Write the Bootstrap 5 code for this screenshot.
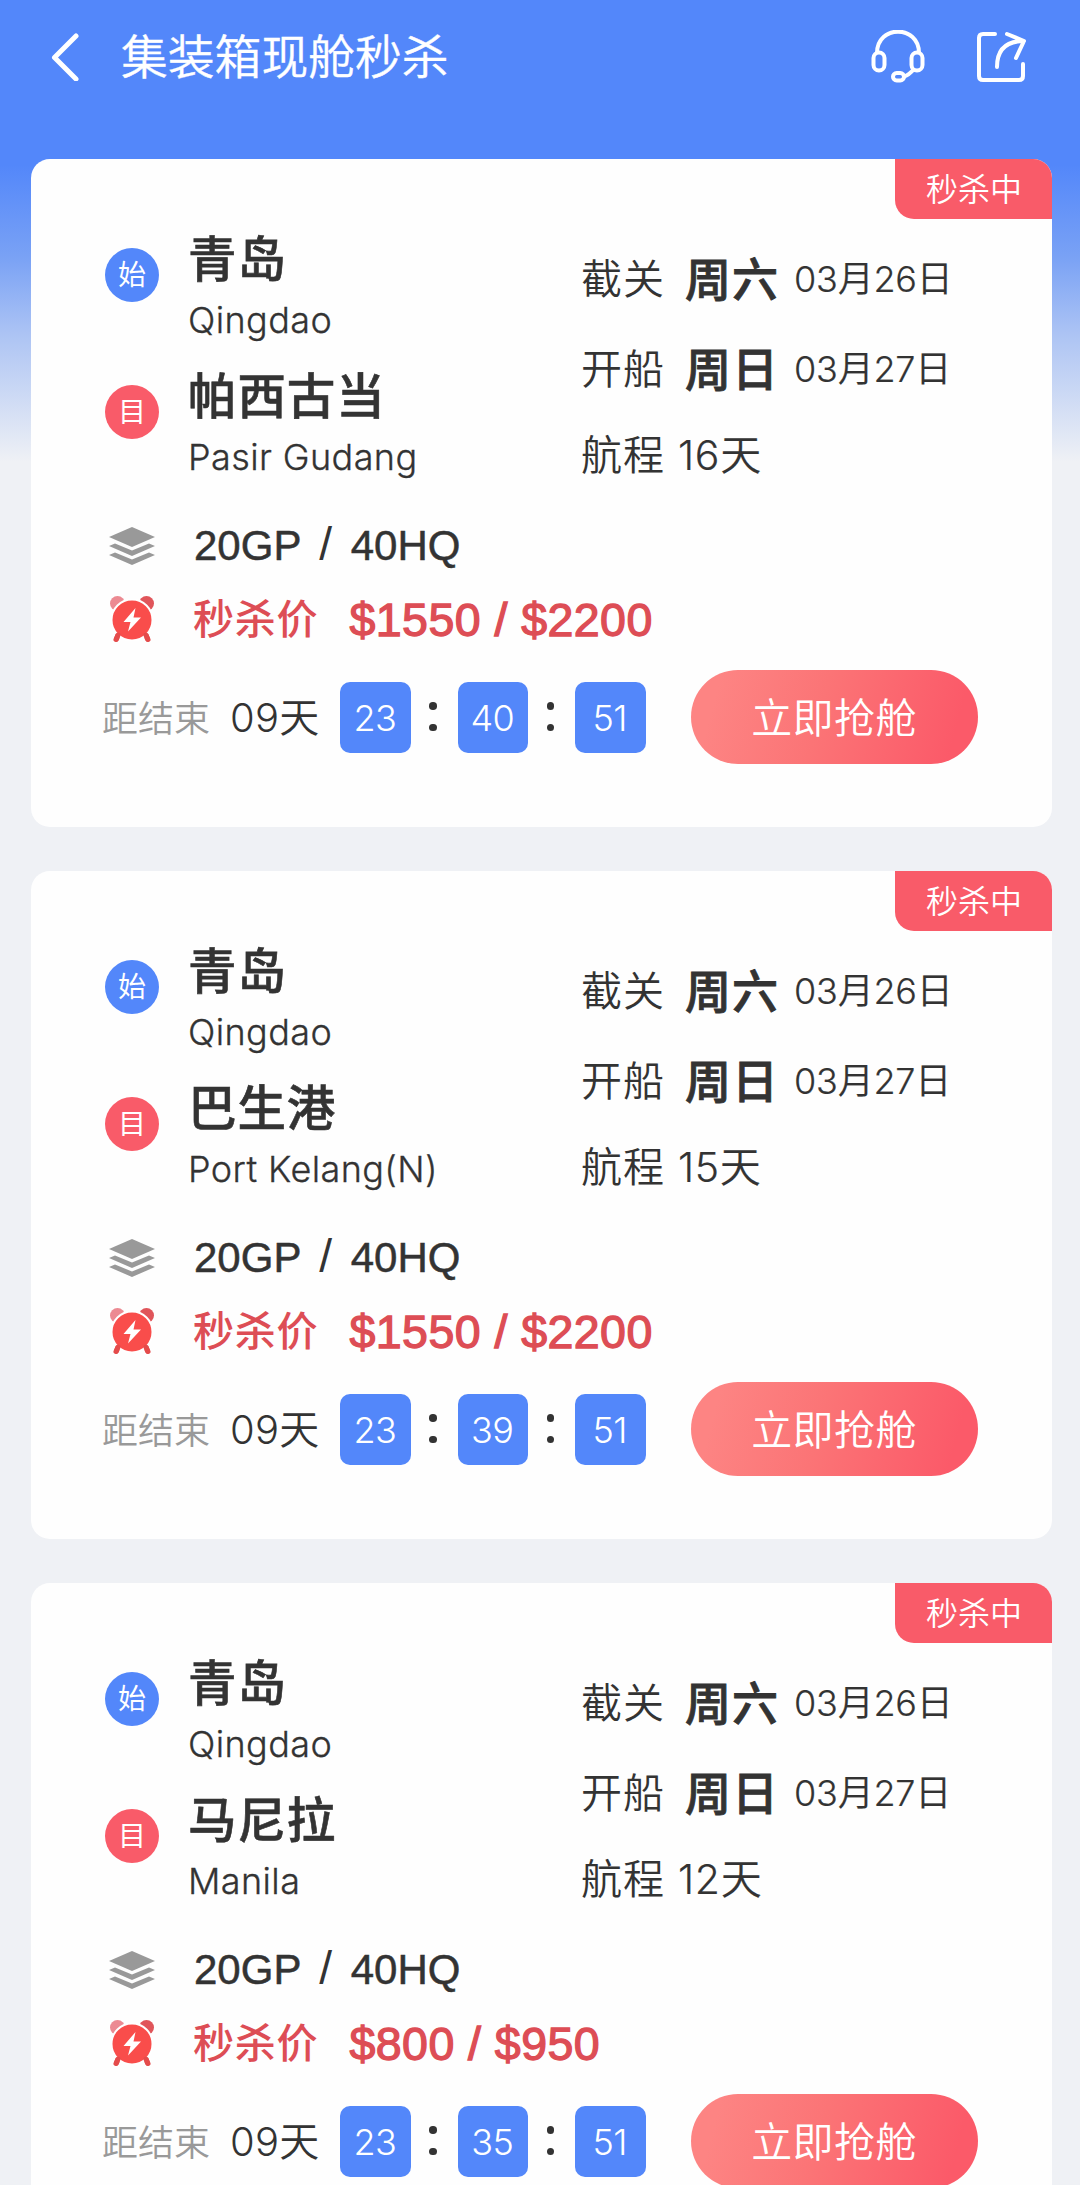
<!DOCTYPE html>
<html lang="zh-CN">
<head>
<meta charset="utf-8">
<meta name="viewport" content="width=device-width, initial-scale=1">
<title>集装箱现舱秒杀</title>
<link href="https://cdn.jsdelivr.net/npm/bootstrap@5.3.0/dist/css/bootstrap.min.css" rel="stylesheet">
<style>
:root{--blue:#5387fa;--red:#f95b69;--ink:#333}
body{font-family:Inter,"Noto Sans CJK SC",sans-serif;color:var(--ink);background:#eff1f5;line-height:1}
.screen{width:1080px;height:2185px;background:linear-gradient(#5387fa 0,#5387fa 165px,#7aa2f5 258px,#adc4f4 335px,#eff1f5 462px) no-repeat #eff1f5}
.topbar{height:114px;padding:0 53px 0 51px;margin-bottom:45px}
.topbar h1{font-size:46.8px;font-weight:350;margin:0 0 0 40px;line-height:60px;-webkit-text-stroke:.4px #fff}
.deals{padding:0 28px 0 31px;gap:44px}
.deal{height:668px;width:1020.5px;border:0;border-radius:19px;padding:73px 0 0 71px;color:var(--ink);flex:none;background:#fefefe}
.flag{width:157px;height:60px;padding:2px 0 0 2px;background:var(--red);color:#fff;font-size:32px;border-radius:0 19px 0 19px;font-weight:350}
.route{width:479px}
.stop{height:137px}
.dot{width:54px;height:54px;margin:16px 0 0 3px;font-size:28px;color:#fff;flex:none}
.dot-start{background:var(--blue)}
.dot-end{background:var(--red)}
.names{margin-left:29px}
.city{font-size:48.5px;line-height:56px;font-weight:500;letter-spacing:.9px;-webkit-text-stroke:.6px var(--ink)}
.city-en{font-size:36px;line-height:50px;margin-top:7px;font-weight:350;letter-spacing:.4px;-webkit-text-stroke:.3px var(--ink);white-space:nowrap}
.sched{margin-top:2px}
.sched>div{height:90px}
.sched>div:last-child{height:82px}
.k{font-size:41px;width:104px;letter-spacing:1px;font-weight:350}
.wk{font-size:46px;font-weight:500;width:110px;letter-spacing:1px;-webkit-text-stroke:.8px var(--ink)}
.dt{font-size:36px;letter-spacing:-.2px;font-weight:350;margin-left:-1px;-webkit-text-stroke:.2px var(--ink)}
.days{font-size:41px;margin-left:-7px;font-weight:350;letter-spacing:.7px;-webkit-text-stroke:.2px var(--ink)}
.spec{height:72px;margin-top:4px}
.price{height:74px}
.spec svg,.price svg{width:48px;height:48px;margin-left:6px;flex:none}
.types{font:42px/42px "Liberation Sans",sans-serif;margin-left:38px;-webkit-text-stroke:.5px var(--ink);white-space:pre}
.types i{font-style:normal;margin:0 6px 0 5px;font-size:46px;line-height:0;-webkit-text-stroke:0}
.price{color:#dd4d55}
.price b{font-size:41px;font-weight:500;margin-left:37px;width:156.5px;letter-spacing:.8px}
.price span{font:46.5px/1 "Liberation Sans",sans-serif;-webkit-text-stroke:1.3px #dd4d55;letter-spacing:.45px;padding-top:2px}
.timer{margin-top:14px;height:94px}
.left-label{font-size:36px;color:#999;width:128px;font-weight:350;padding-top:3px}
.left-days{font-size:40px;width:110px;font-weight:350;padding-top:1px;letter-spacing:.3px}
.unit{width:70.5px;height:70.5px;margin-top:1px;border-radius:10px;background:var(--blue);color:#fff;font-size:36px;font-weight:330;letter-spacing:-.6px;padding-right:1px}
.sep{width:47px;gap:14px;padding-right:2px;margin-top:-1px}
.sep::before,.sep::after{content:"";width:7.5px;height:7.5px;border-radius:50%;background:var(--ink)}
.grab{width:287px;height:94px;margin-left:45px;border:0;border-radius:47px;background:linear-gradient(105deg,#fd8483 10%,#fb7476 45%,#fb5a69 90%);color:#fff;font-size:41px;padding:3px 0 0;font-weight:350;letter-spacing:.4px}
</style>
</head>
<body>
<svg class="d-none" aria-hidden="true">
  <defs>
    <symbol id="layers" viewBox="0 0 48 48"><g fill="#999"><path d="M24 5 47 15 24 25 1 15z"/><path d="M1 24 7 21.400 24 28.500 41 21.400 47 24 24 34z"/><path d="M1 33 7 30.400 24 37.500 41 30.400 47 33 24 43z"/></g></symbol>
    <symbol id="alarm" viewBox="0 0 48 48"><circle cx="9.500" cy="8.500" r="7.500" fill="#ec8a92"/><circle cx="38.500" cy="8.500" r="7.500" fill="#e0555a"/><path d="M11 38 8 44.500M37 38 40 44.500" stroke="#e44b4b" stroke-width="5" stroke-linecap="round"/><circle cx="24" cy="25" r="20.500" fill="#f94d4b" stroke="#fff" stroke-width="2"/><path d="M10 40 8.500 44M38 40 39.500 44" stroke="#e44b4b" stroke-width="5" stroke-linecap="round"/><path d="M27.500 13 15.500 27H22.500L20 36.500 33 22.500H25.500z" fill="#fff"/></symbol>
  </defs>
</svg>
<div class="screen overflow-hidden">
  <header class="topbar d-flex align-items-center text-white">
    <svg width="30" height="48" viewBox="0 0 30 48" fill="none" stroke="#fff" stroke-width="5" stroke-linecap="round" stroke-linejoin="round"><path d="M25 3 3.500 24.500 25 46"/></svg>
    <h1>集装箱现舱秒杀</h1>
    <svg class="ms-auto" width="54" height="54" viewBox="0 0 54 54" fill="none" stroke="#fff" stroke-width="4"><path d="M6 23C6-5.500 48-5.500 48 23"/><rect x="2.500" y="22.500" width="11" height="18" rx="5.500"/><rect x="40.500" y="22.500" width="11" height="18" rx="5.500"/><rect x="22" y="43" width="11" height="7.500" rx="3.700"/><path d="M33 46.500Q38 45 43 39"/></svg>
    <svg width="51" height="52" viewBox="0 0 51 52" style="margin-left:51px" fill="none" stroke="#fff" stroke-width="4" stroke-linecap="round" stroke-linejoin="round"><path d="M19 3H7Q3 3 3 7V45Q3 49 7 49H43Q47 49 47 45V33"/><path d="M21 36C21 20 29 10 48 10M31 3 48 10 40 27"/></svg>
  </header>
  <main class="deals d-flex flex-column">

    <section class="card deal">
      <div class="flag position-absolute top-0 end-0 d-flex align-items-center justify-content-center">秒杀中</div>
      <div class="d-flex">
        <div class="route">
          <div class="stop d-flex"><div class="dot dot-start rounded-circle d-flex align-items-center justify-content-center">始</div><div class="names"><div class="city">青岛</div><div class="city-en">Qingdao</div></div></div>
          <div class="stop d-flex"><div class="dot dot-end rounded-circle d-flex align-items-center justify-content-center">目</div><div class="names"><div class="city">帕西古当</div><div class="city-en">Pasir Gudang</div></div></div>
        </div>
        <div class="sched">
          <div class="d-flex align-items-center"><span class="k">截关</span><span class="wk">周六</span><span class="dt">03月26日</span></div>
          <div class="d-flex align-items-center"><span class="k">开船</span><span class="wk">周日</span><span class="dt">03月27日</span></div>
          <div class="d-flex align-items-center"><span class="k">航程</span><span class="days">16天</span></div>
        </div>
      </div>
      <div class="spec d-flex align-items-center"><svg><use href="#layers"/></svg><span class="types">20GP<i> / </i>40HQ</span></div>
      <div class="price d-flex align-items-center"><svg><use href="#alarm"/></svg><b>秒杀价</b><span>$1550 / $2200</span></div>
      <div class="timer d-flex align-items-center">
        <span class="left-label">距结束</span><span class="left-days">09天</span>
        <span class="unit d-flex align-items-center justify-content-center">23</span><span class="sep d-flex flex-column align-items-center"></span>
        <span class="unit d-flex align-items-center justify-content-center">40</span><span class="sep d-flex flex-column align-items-center"></span>
        <span class="unit d-flex align-items-center justify-content-center">51</span>
        <button type="button" class="btn grab">立即抢舱</button>
      </div>
    </section>

    <section class="card deal">
      <div class="flag position-absolute top-0 end-0 d-flex align-items-center justify-content-center">秒杀中</div>
      <div class="d-flex">
        <div class="route">
          <div class="stop d-flex"><div class="dot dot-start rounded-circle d-flex align-items-center justify-content-center">始</div><div class="names"><div class="city">青岛</div><div class="city-en">Qingdao</div></div></div>
          <div class="stop d-flex"><div class="dot dot-end rounded-circle d-flex align-items-center justify-content-center">目</div><div class="names"><div class="city">巴生港</div><div class="city-en">Port Kelang(N)</div></div></div>
        </div>
        <div class="sched">
          <div class="d-flex align-items-center"><span class="k">截关</span><span class="wk">周六</span><span class="dt">03月26日</span></div>
          <div class="d-flex align-items-center"><span class="k">开船</span><span class="wk">周日</span><span class="dt">03月27日</span></div>
          <div class="d-flex align-items-center"><span class="k">航程</span><span class="days">15天</span></div>
        </div>
      </div>
      <div class="spec d-flex align-items-center"><svg><use href="#layers"/></svg><span class="types">20GP<i> / </i>40HQ</span></div>
      <div class="price d-flex align-items-center"><svg><use href="#alarm"/></svg><b>秒杀价</b><span>$1550 / $2200</span></div>
      <div class="timer d-flex align-items-center">
        <span class="left-label">距结束</span><span class="left-days">09天</span>
        <span class="unit d-flex align-items-center justify-content-center">23</span><span class="sep d-flex flex-column align-items-center"></span>
        <span class="unit d-flex align-items-center justify-content-center">39</span><span class="sep d-flex flex-column align-items-center"></span>
        <span class="unit d-flex align-items-center justify-content-center">51</span>
        <button type="button" class="btn grab">立即抢舱</button>
      </div>
    </section>

    <section class="card deal">
      <div class="flag position-absolute top-0 end-0 d-flex align-items-center justify-content-center">秒杀中</div>
      <div class="d-flex">
        <div class="route">
          <div class="stop d-flex"><div class="dot dot-start rounded-circle d-flex align-items-center justify-content-center">始</div><div class="names"><div class="city">青岛</div><div class="city-en">Qingdao</div></div></div>
          <div class="stop d-flex"><div class="dot dot-end rounded-circle d-flex align-items-center justify-content-center">目</div><div class="names"><div class="city">马尼拉</div><div class="city-en">Manila</div></div></div>
        </div>
        <div class="sched">
          <div class="d-flex align-items-center"><span class="k">截关</span><span class="wk">周六</span><span class="dt">03月26日</span></div>
          <div class="d-flex align-items-center"><span class="k">开船</span><span class="wk">周日</span><span class="dt">03月27日</span></div>
          <div class="d-flex align-items-center"><span class="k">航程</span><span class="days">12天</span></div>
        </div>
      </div>
      <div class="spec d-flex align-items-center"><svg><use href="#layers"/></svg><span class="types">20GP<i> / </i>40HQ</span></div>
      <div class="price d-flex align-items-center"><svg><use href="#alarm"/></svg><b>秒杀价</b><span>$800 / $950</span></div>
      <div class="timer d-flex align-items-center">
        <span class="left-label">距结束</span><span class="left-days">09天</span>
        <span class="unit d-flex align-items-center justify-content-center">23</span><span class="sep d-flex flex-column align-items-center"></span>
        <span class="unit d-flex align-items-center justify-content-center">35</span><span class="sep d-flex flex-column align-items-center"></span>
        <span class="unit d-flex align-items-center justify-content-center">51</span>
        <button type="button" class="btn grab">立即抢舱</button>
      </div>
    </section>

  </main>
</div>
<script src="https://cdn.jsdelivr.net/npm/bootstrap@5.3.0/dist/js/bootstrap.bundle.min.js"></script>
</body>
</html>
